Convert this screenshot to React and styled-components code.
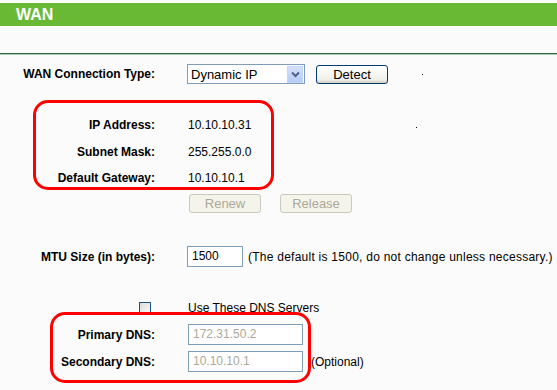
import React from "react";
import styled, { createGlobalStyle } from "styled-components";

const Global = createGlobalStyle`
  html, body { margin: 0; padding: 0; background: #fbfbfb; }
  body { font-family: "Liberation Sans", Arial, sans-serif; font-size: 12px; color: #000; }
`;

const Page = styled.div`
  position: relative;
  width: 557px;
  height: 390px;
  overflow: hidden;
  padding-top: 3px;
  box-sizing: border-box;
`;

const Header = styled.div`
  height: 23px;
  background: #69b935;
  color: #fff;
  font-weight: bold;
  font-size: 16px;
  line-height: 23px;
  padding-left: 16px;
`;

const Divider = styled.div`
  margin-top: 27px;
  height: 1px;
  background: #2d6b45;
  border-bottom: 1px solid #a9c9b3;
`;

const Row = styled.div`
  display: flex;
  align-items: center;
  height: ${(p) => p.$h || 27}px;
  margin-top: ${(p) => p.$mt || 0}px;
`;

const Label = styled.div`
  width: 155px;
  flex: none;
  text-align: right;
  font-weight: bold;
  display: flex;
  justify-content: flex-end;
  align-items: center;
  padding-right: ${(p) => p.$pr || 0}px;
  box-sizing: border-box;
`;

const Value = styled.div`
  display: flex;
  align-items: center;
  margin-left: ${(p) => p.$ml ?? 33}px;
`;

const Select = styled.div`
  width: 118px;
  height: 20px;
  box-sizing: border-box;
  border: 1px solid #7f9db9;
  background: #fff;
  display: flex;
  align-items: center;
  justify-content: space-between;
  padding-left: 3px;
  font-size: 13px;
`;

const Arrow = styled.div`
  width: 16px;
  height: 17px;
  margin-right: 1px;
  background: linear-gradient(#d4e0fb, #b7cbf6);
  border: 1px solid #c3d3fd;
  box-sizing: border-box;
  display: flex;
  align-items: center;
  justify-content: center;
`;

const XpButton = styled.button`
  width: 72px;
  height: 19px;
  margin-left: ${(p) => p.$ml || 0}px;
  padding: 0;
  font-family: inherit;
  font-size: 13px;
  border-radius: 3px;
  border: 1px solid ${(p) => (p.disabled ? "#cac8bb" : "#003c74")};
  background: ${(p) =>
    p.disabled ? "#f5f4ea" : "linear-gradient(#ffffff, #f0f0ea 80%, #d6d0c5)"};
  color: ${(p) => (p.disabled ? "#aca899" : "#000")};
  line-height: 17px;
`;

const Dot = styled.span`
  width: 1px;
  height: 1px;
  background: #000;
  margin-left: ${(p) => p.$ml}px;
`;

const Input = styled.div`
  width: ${(p) => p.$w}px;
  height: 21px;
  box-sizing: border-box;
  border: 1px solid #7f9db9;
  background: #fff;
  padding-left: ${(p) => p.$pl || 4}px;
  line-height: 19px;
  font-size: 12px;
  color: ${(p) => (p.$disabled ? "#aca899" : "#000")};
`;

const Note = styled.span`
  margin-left: ${(p) => p.$ml || 5}px;
  letter-spacing: ${(p) => p.$ls || 0}px;
`;

const Checkbox = styled.div`
  width: 12px;
  height: 12px;
  box-sizing: border-box;
  border: 1px solid #1c5180;
  background: linear-gradient(135deg, #dcdcd7, #f7f7f4);
`;

const Highlight = styled.div`
  position: absolute;
  left: ${(p) => p.$x}px;
  top: ${(p) => p.$y}px;
  width: ${(p) => p.$w}px;
  height: ${(p) => p.$h}px;
  box-sizing: border-box;
  border: 3px solid #ff0000;
  border-radius: 15px;
  pointer-events: none;
`;

export default function App() {
  return (
    <>
      <Global />
      <Page>
        <Header>WAN</Header>
        <Divider />
        <Row $h={26} $mt={6}>
          <Label>WAN Connection Type:</Label>
          <Value $ml={32}>
            <Select>
              <span>Dynamic IP</span>
              <Arrow>
                <svg width="9" height="7" viewBox="0 0 9 7">
                  <path d="M1 1.5 L4.5 5 L8 1.5" fill="none" stroke="#4d6185" strokeWidth="2" />
                </svg>
              </Arrow>
            </Select>
            <XpButton $ml={11}>Detect</XpButton>
            <Dot $ml={34} />
          </Value>
        </Row>
        <Row $mt={24}>
          <Label>IP Address:</Label>
          <Value>10.10.10.31<Dot $ml={165} style={{ marginTop: 5 }} /></Value>
        </Row>
        <Row>
          <Label>Subnet Mask:</Label>
          <Value>255.255.0.0</Value>
        </Row>
        <Row $h={26}>
          <Label>Default Gateway:</Label>
          <Value>10.10.10.1</Value>
        </Row>
        <Row $h={25}>
          <Label />
          <Value $ml={34}>
            <XpButton disabled>Renew</XpButton>
            <XpButton disabled $ml={19}>Release</XpButton>
          </Value>
        </Row>
        <Row $mt={27}>
          <Label>MTU Size (in bytes):</Label>
          <Value $ml={32}>
            <Input $w={56}>1500</Input>
            <Note $ls={0.25}>(The default is 1500, do not change unless necessary.)</Note>
          </Value>
        </Row>
        <Row $h={26} $mt={25}>
          <Label $pr={4}>
            <Checkbox />
          </Label>
          <Value>Use These DNS Servers</Value>
        </Row>
        <Row $mt={0}>
          <Label>Primary DNS:</Label>
          <Value>
            <Input $w={115} $disabled>172.31.50.2</Input>
          </Value>
        </Row>
        <Row>
          <Label>Secondary DNS:</Label>
          <Value>
            <Input $w={115} $disabled>10.10.10.1</Input>
            <Note $ml={8}>(Optional)</Note>
          </Value>
        </Row>
        <Highlight $x={33} $y={100} $w={241} $h={90} />
        <Highlight $x={50} $y={312} $w={261} $h={71} />
      </Page>
    </>
  );
}
